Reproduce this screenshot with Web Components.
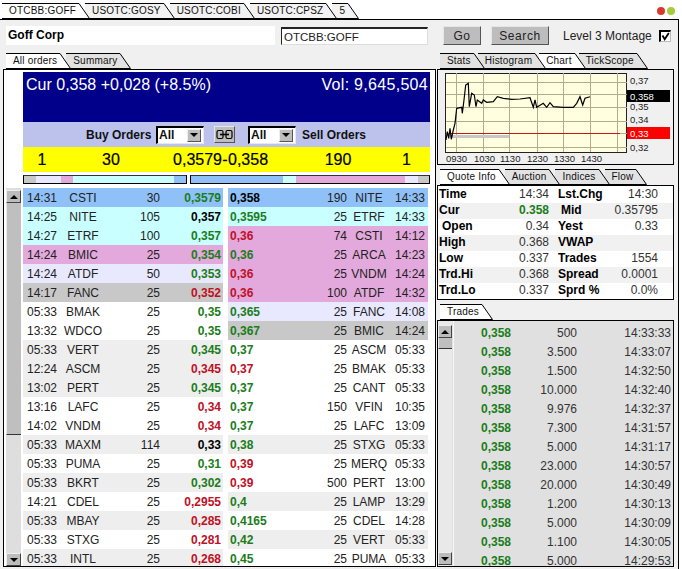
<!DOCTYPE html>
<html>
<head>
<meta charset="utf-8">
<title>Level 3 Montage</title>
<style>
  html, body { margin: 0; padding: 0; background: #fff; overflow: hidden; }
  body { width: 682px; height: 569px; font-family: "Liberation Sans", Arial, sans-serif; }
</style>
</head>
<body>
<montage-app></montage-app>
<script>
const GREEN = '#1a7d1a';
const RED = '#c01025';
const BLACK = '#000';
const ROW_BG = { b: '#8fc1f8', c: '#c9ffff', p: '#e3a9dc', l: '#e8e8ff', g: '#c8c8c8', w: '#fff', e: '#eeeeee' };

// bg, time, symbol, size, price, price colour
const BUY_ROWS = [
  ['b', '14:31', 'CSTI', '30', '0,3579', GREEN],
  ['c', '14:25', 'NITE', '105', '0,357', BLACK],
  ['c', '14:27', 'ETRF', '100', '0,357', GREEN],
  ['p', '14:24', 'BMIC', '25', '0,354', GREEN],
  ['l', '14:24', 'ATDF', '50', '0,353', GREEN],
  ['g', '14:17', 'FANC', '25', '0,352', RED],
  ['w', '05:33', 'BMAK', '25', '0,35', GREEN],
  ['w', '13:32', 'WDCO', '25', '0,35', GREEN],
  ['e', '05:33', 'VERT', '25', '0,345', GREEN],
  ['e', '12:24', 'ASCM', '25', '0,345', RED],
  ['e', '13:02', 'PERT', '25', '0,345', GREEN],
  ['w', '13:16', 'LAFC', '25', '0,34', RED],
  ['w', '14:02', 'VNDM', '25', '0,34', RED],
  ['e', '05:33', 'MAXM', '114', '0,33', BLACK],
  ['w', '05:33', 'PUMA', '25', '0,31', GREEN],
  ['e', '05:33', 'BKRT', '25', '0,302', GREEN],
  ['w', '14:21', 'CDEL', '25', '0,2955', RED],
  ['e', '05:33', 'MBAY', '25', '0,285', RED],
  ['w', '05:33', 'STXG', '25', '0,281', RED],
  ['e', '05:33', 'INTL', '25', '0,268', RED]
];

const SELL_ROWS = [
  ['b', '14:33', 'NITE', '190', '0,358', BLACK],
  ['c', '14:33', 'ETRF', '25', '0,3595', GREEN],
  ['p', '14:12', 'CSTI', '74', '0,36', RED],
  ['p', '14:23', 'ARCA', '25', '0,36', GREEN],
  ['p', '14:24', 'VNDM', '25', '0,36', RED],
  ['p', '14:32', 'ATDF', '100', '0,36', RED],
  ['l', '14:08', 'FANC', '25', '0,365', GREEN],
  ['g', '14:24', 'BMIC', '25', '0,367', GREEN],
  ['w', '05:33', 'ASCM', '25', '0,37', GREEN],
  ['w', '05:33', 'BMAK', '25', '0,37', RED],
  ['w', '05:33', 'CANT', '25', '0,37', GREEN],
  ['w', '10:35', 'VFIN', '150', '0,37', GREEN],
  ['w', '13:09', 'LAFC', '25', '0,37', GREEN],
  ['e', '05:33', 'STXG', '25', '0,38', GREEN],
  ['w', '05:33', 'MERQ', '25', '0,39', RED],
  ['w', '13:00', 'PERT', '500', '0,39', RED],
  ['e', '13:29', 'LAMP', '25', '0,4', GREEN],
  ['w', '14:28', 'CDEL', '25', '0,4165', GREEN],
  ['e', '05:33', 'VERT', '25', '0,42', GREEN],
  ['w', '05:33', 'PUMA', '25', '0,45', GREEN]
];

const TRADES = [
  ['500', '14:33:33'], ['3.500', '14:33:07'], ['1.500', '14:32:50'], ['10.000', '14:32:40'],
  ['9.976', '14:32:37'], ['7.300', '14:31:57'], ['5.000', '14:31:17'], ['23.000', '14:30:57'],
  ['20.000', '14:30:49'], ['1.200', '14:30:13'], ['5.000', '14:30:09'], ['1.100', '14:30:05'],
  ['5.000', '14:29:53']
];

class TabStrip extends HTMLElement {
  connectedCallback() {
    const items = this.getAttribute('items').split('|');
    const active = Number(this.getAttribute('active') || 0);
    const height = Number(this.getAttribute('height') || 16);
    const overlap = Number(this.getAttribute('overlap') || 5);
    const off = this.getAttribute('off') || '#e2e2e2';
    const tabs = items.map((label, i) => {
      const fill = i === active ? '#fff' : off;
      return `
        <div class="tab" style="z-index:${items.length - i};background:linear-gradient(${fill},${fill}) left/calc(100% - 12px) 100% no-repeat">
          <span>${label}</span>
          <svg width="12" height="${height}" viewBox="0 0 12 ${height}">
            <polygon points="0,0.5 1,0.5 11.5,${height - 0.5} 0,${height - 0.5}" fill="${fill}"/>
            <path d="M0 0.5H1L11.5 ${height - 0.5}H0" fill="none" stroke="#000"/>
          </svg>
        </div>`;
    }).join('');
    this.attachShadow({ mode: 'open' });
    this.shadowRoot.innerHTML = `
      <style>
        :host { display: flex; height: ${height}px; font-size: 10px; letter-spacing: 0.2px; color: #111; }
        .tab { display: flex; position: relative; margin-right: -${overlap}px; }
        .tab span {
          padding: 0 2px 0 7px;
          line-height: ${height - 2}px;
          border-top: 1px solid #000;
          border-bottom: 1px solid #000;
          white-space: nowrap;
        }
        .tab:first-child span { border-left: 1px solid #000; }
        svg { display: block; }
      </style>
      ${tabs}
    `;
  }
}

class BevelButton extends HTMLElement {
  constructor() {
    super();
    this.attachShadow({ mode: 'open' });
    this.shadowRoot.innerHTML = `
      <style>
        :host {
          display: flex;
          align-items: center;
          justify-content: center;
          box-sizing: border-box;
          height: 19px;
          background: #bdbdbd;
          border: 1px solid;
          border-color: #e6e6e6 #555 #555 #e6e6e6;
          font-size: 12px;
          letter-spacing: 0.6px;
          color: #222;
        }
      </style>
      <slot></slot>
    `;
  }
}

class OrderSelect extends HTMLElement {
  constructor() {
    super();
    this.attachShadow({ mode: 'open' });
    this.shadowRoot.innerHTML = `
      <style>
        :host {
          display: flex;
          align-items: center;
          justify-content: space-between;
          box-sizing: border-box;
          width: 48px;
          height: 18px;
          padding: 0 2px 0 1px;
          background: #fff;
          border: 1px solid;
          border-color: #000 #e8e8e8 #e8e8e8 #000;
          border-width: 2px 1px 1px 2px;
          font-size: 12px;
          font-weight: bold;
          flex: none;
        }
        .arrow {
          display: flex;
          align-items: center;
          justify-content: center;
          width: 14px;
          height: 13px;
          background: #bdbdbd;
          border: 1px solid;
          border-color: #eee #555 #555 #eee;
          box-sizing: border-box;
        }
        .arrow i { width: 0; height: 0; border: 4px solid transparent; border-top-color: #000; border-bottom: 0; }
      </style>
      <slot></slot>
      <span class="arrow"><i></i></span>
    `;
  }
}

class DepthBar extends HTMLElement {
  connectedCallback() {
    // segments as colour key:pixels
    const segs = this.getAttribute('segments').split(' ').map(s => {
      const [key, w] = s.split(':');
      return `<i style="background:${ROW_BG[key]};flex:${w} 0 0"></i>`;
    }).join('');
    this.attachShadow({ mode: 'open' });
    this.shadowRoot.innerHTML = `
      <style>
        :host { display: flex; box-sizing: border-box; height: 9px; border: 1px solid #000; border-top-color: #333; }
        i { display: block; }
      </style>
      ${segs}
    `;
  }
}

class OrderRow extends HTMLElement {
  connectedCallback() {
    const [bg, time, sym, size, price, colour] = JSON.parse(this.getAttribute('data'));
    const sell = this.getAttribute('side') === 'sell';
    const cells = sell
      ? `<b class="pr" style="color:${colour}">${price}</b><span class="sz">${size}</span><span class="sy">${sym}</span><span class="tm">${time}</span>`
      : `<span class="tm">${time}</span><span class="sy">${sym}</span><span class="sz">${size}</span><b class="pr" style="color:${colour}">${price}</b>`;
    this.attachShadow({ mode: 'open' });
    this.shadowRoot.innerHTML = `
      <style>
        :host {
          display: grid;
          box-sizing: border-box;
          height: 19px;
          line-height: 18px;
          font-size: 12px;
          color: #222;
          background: ${ROW_BG[bg]};
          grid-template-columns: ${sell ? '60px 57px 44px 34px' : '36px 40px 57px 61px'};
          padding: ${sell ? '1px 5px 0 2px' : '1px 2px 0 4px'};
        }
        .sy { text-align: center; white-space: nowrap; }
        .sz { text-align: right; }
        .tm { text-align: ${sell ? 'right' : 'left'}; }
        .pr { text-align: ${sell ? 'left' : 'right'}; }
      </style>
      ${cells}
    `;
  }
}

class ScrollTrack extends HTMLElement {
  connectedCallback() {
    const thumb = this.getAttribute('thumb');
    this.attachShadow({ mode: 'open' });
    this.shadowRoot.innerHTML = `
      <style>
        :host { display: flex; flex-direction: column; width: ${this.getAttribute('width') || 14}px; background: ${this.getAttribute('track') || '#dedede'}; flex: none; }
        .btn {
          display: flex;
          align-items: center;
          justify-content: center;
          box-sizing: border-box;
          height: 13px;
          background: #bcbcbc;
          border: 1px solid;
          border-color: #eee #444 #444 #eee;
          flex: none;
        }
        .up i, .down i { width: 0; height: 0; border: 4px solid transparent; }
        .up i { border-bottom-color: #000; border-top: 0; }
        .down i { border-top-color: #000; border-bottom: 0; }
        .thumb { box-sizing: border-box; height: ${thumb}px; background: #bfbfbf; border-bottom: 1px solid #333; border-left: 1px solid #e8e8e8; flex: none; }
        .rest { flex: 1; }
        .lead { height: ${this.getAttribute('lead') || 0}px; flex: none; }
        .tail { height: ${this.getAttribute('tail') || 0}px; flex: none; }
      </style>
      <div class="lead"></div>
      <div class="btn up"><i></i></div>
      <div class="thumb"></div>
      <div class="rest"></div>
      <div class="btn down"><i></i></div>
      <div class="tail"></div>
    `;
  }
}

class OrderBook extends HTMLElement {
  connectedCallback() {
    const row = (side, r) => `<order-row side="${side}" data='${JSON.stringify(r)}'></order-row>`;
    this.attachShadow({ mode: 'open' });
    this.shadowRoot.innerHTML = `
      <style>
        :host {
          display: block;
          box-sizing: border-box;
          height: 498px;
          background: #fff;
          border: 1px solid #000;
          overflow: hidden;
        }
        .top { margin: 2px 5px 0 19px; }
        .cur {
          display: flex;
          justify-content: space-between;
          height: 50px;
          padding: 3px 2px 0 3px;
          box-sizing: border-box;
          background: #00008b;
          color: #fff;
          font-size: 16px;
          line-height: 20px;
        }
        .cur span:last-child { letter-spacing: 0.3px; }
        .filter {
          display: flex;
          align-items: center;
          height: 25px;
          padding-left: 63px;
          background: #bcc2ec;
          font-size: 12px;
          font-weight: bold;
          color: #111;
        }
        .filter span { width: 64px; white-space: nowrap; flex: none; }
        .filter order-select:first-of-type { margin-left: 6px; }
        .link { width: 21px; height: 17px; margin: 0 13px 0 10px; flex: none; }
        .filter .sell { margin-left: 6px; }
        .best {
          display: grid;
          grid-template-columns: 38px 100px 61px 6px 80px 60px 1fr;
          height: 25px;
          line-height: 25px;
          background: #ffff00;
          font-size: 16px;
          -webkit-text-stroke: 0.2px #000;
        }
        .best span { text-align: center; }
        .best .r { text-align: right; }
        .best .l { text-align: left; }
        .best .last { text-align: right; padding-right: 19px; }
        .bars { display: flex; gap: 3px; margin: 3px 5px 0 19px; }
        .bars depth-bar:first-child { width: 164px; }
        .bars depth-bar:last-child { width: 240px; }
        .rows { display: flex; margin: 4px 0 0 2px; gap: 2px; height: 380px; }
        .sides { display: flex; gap: 5px; }
        .side { width: 200px; }
      </style>
      <div class="top">
        <div class="cur"><span>Cur 0,358 +0,028 (+8.5%)</span><span>Vol: 9,645,504</span></div>
        <div class="filter">
          <span>Buy Orders</span>
          <order-select>All</order-select>
          <bevel-button class="link">
            <svg width="17" height="11" viewBox="0 0 17 11" fill="none" stroke="#000" stroke-width="1.2">
              <rect x="1" y="1.5" width="6" height="8" rx="1.5"/>
              <rect x="10" y="1.5" width="6" height="8" rx="1.5"/>
              <path d="M4 5.5H13" stroke-width="1.6"/>
            </svg>
          </bevel-button>
          <order-select>All</order-select>
          <span class="sell">Sell Orders</span>
        </div>
        <div class="best">
          <span>1</span><span>30</span><span class="r">0,3579</span><span>-</span><span class="l">0,358</span><span>190</span><span class="last">1</span>
        </div>
      </div>
      <div class="bars">
        <depth-bar segments="g:12 l:25 p:12 c:101 b:12"></depth-bar>
        <depth-bar segments="b:92 c:13 p:109 l:13 g:11"></depth-bar>
      </div>
      <div class="rows">
        <scroll-track thumb="232" lead="2" width="15" tail="2"></scroll-track>
        <div class="sides">
          <div class="side">${BUY_ROWS.map(r => row('buy', r)).join('')}</div>
          <div class="side">${SELL_ROWS.map(r => row('sell', r)).join('')}</div>
        </div>
      </div>
    `;
  }
}

class ChartPanel extends HTMLElement {
  connectedCallback() {
    // line traced in 3x crop coordinates, mapped to page pixels below
    const raw = [18,270, 22,245, 26,265, 30,235, 34,268, 40,240, 45,220, 50,175, 65,172, 67,190, 72,150, 77,105,
      85,100, 88,170, 95,130, 103,135, 108,170, 112,150, 125,160, 130,150, 140,157, 160,155, 172,140, 190,145,
      215,148, 240,147, 270,143, 280,172, 285,150, 290,172, 310,160, 320,172, 330,158, 340,170, 370,172, 400,172,
      410,160, 420,140, 428,165, 435,145, 450,140];
    const pts = [];
    for (let i = 0; i < raw.length; i += 2) {
      pts.push((440 + raw[i] / 3).toFixed(1) + ',' + (50 + raw[i + 1] / 3).toFixed(1));
    }
    const vx = [456, 483, 509, 537, 563, 590, 617];
    const hy = [82, 94, 107, 121, 133, 147];
    const grid = vx.map(x => `<path d="M${x + 0.5} 73V152"/>`).join('') +
      hy.map(y => `<path d="M446 ${y + 0.5}H627"/>`).join('');
    const times = [['0930', 446], ['1030', 474], ['1130', 500], ['1230', 527], ['1330', 554], ['1430', 581]];
    const axis = [['0,37', 84], ['0,35', 110], ['0,34', 123], ['0,32', 151]];
    this.attachShadow({ mode: 'open' });
    this.shadowRoot.innerHTML = `
      <style>
        :host { display: block; box-sizing: border-box; height: 96px; border: 1px solid #000; background: #f0f0f0; }
        svg { display: block; font-family: "Liberation Sans", Arial, sans-serif; font-size: 9.5px; }
        text { fill: #222; }
      </style>
      <svg width="235" height="94" viewBox="438 70 235 94">
        <rect x="445.5" y="73.5" width="181" height="79" fill="#ffffdf" stroke="#222"/>
        <g stroke="#b3ab90" fill="none">${grid}</g>
        <rect x="450" y="135" width="59" height="3" fill="#c8c8c8"/>
        <path d="M450 133.5H620" stroke="#c01818"/>
        <polyline points="${pts.join(' ')}" fill="none" stroke="#000" stroke-width="1.2"/>
        <rect x="627" y="90" width="43" height="12" fill="#000"/>
        <rect x="627" y="127" width="43" height="12" fill="#ff0000"/>
        ${axis.map(([t, y]) => `<text x="630" y="${y}">${t}</text>`).join('')}
        <text x="630" y="99.5" style="fill:#fff">0,358</text>
        <text x="630" y="137" style="fill:#fff">0,33</text>
        ${times.map(([t, x]) => `<text x="${x}" y="162">${t}</text>`).join('')}
      </svg>
    `;
  }
}

class QuoteInfo extends HTMLElement {
  connectedCallback() {
    const rows = [
      ['Time', '14:34', 'Lst.Chg', '14:30'],
      ['Cur', '0.358', 'Mid', '0.35795'],
      ['Open', '0.34', 'Yest', '0.33'],
      ['High', '0.368', 'VWAP', ''],
      ['Low', '0.337', 'Trades', '1554'],
      ['Trd.Hi', '0.368', 'Spread', '0.0001'],
      ['Trd.Lo', '0.337', 'Sprd %', '0.0%']
    ];
    const html = rows.map(([a, b, c, d], i) => `
      <div class="row${i % 2 ? ' alt' : ''}">
        <b class="${a === 'Open' ? 'in' : ''}">${a}</b>
        <span class="${a === 'Cur' ? 'cur' : ''}">${b}</span>
        <b class="${c === 'Mid' ? 'in' : ''}">${c}</b>
        <span>${d}</span>
      </div>`).join('');
    this.attachShadow({ mode: 'open' });
    this.shadowRoot.innerHTML = `
      <style>
        :host { display: block; box-sizing: border-box; height: 115px; padding-top: 1px; background: #fff; border: 1px solid #000; }
        .row {
          display: grid;
          grid-template-columns: 50px 60px 60px 49px;
          column-gap: 0;
          height: 16px;
          line-height: 15px;
          font-size: 12px;
          padding-left: 1px;
          color: #333;
        }
        .row b { color: #000; }
        .row b:nth-of-type(2) { margin-left: 9px; }
        .row b.in { padding-left: 3px; }
        .row span { text-align: right; }
        .alt { background: #f1f1f1; }
        .cur { color: ${GREEN}; font-weight: bold; }
      </style>
      ${html}
    `;
  }
}

class TradesList extends HTMLElement {
  connectedCallback() {
    this.attachShadow({ mode: 'open' });
    this.shadowRoot.innerHTML = `
      <style>
        :host {
          display: flex;
          box-sizing: border-box;
          height: 247px;
          background: #e0e0e0;
          border: 1px solid #000;
          overflow: hidden;
        }
        scroll-track { margin-right: 1px; }
        .rows { padding-top: 3px; height: 247px; border-left: 1px solid #f8f8f8; }
        .row {
          display: grid;
          grid-template-columns: 57px 66px 94px;
          height: 19px;
          line-height: 19px;
          font-size: 12px;
          color: #333;
          text-align: right;
        }
        b { color: ${GREEN}; }
      </style>
      <scroll-track thumb="11" lead="4" track="#e9e9e9" tail="1"></scroll-track>
      <div class="rows">
        ${TRADES.map(([size, time]) => `<div class="row"><b>0,358</b><span>${size}</span><span>${time}</span></div>`).join('')}
      </div>
    `;
  }
}

class MontageHeader extends HTMLElement {
  constructor() {
    super();
    this.attachShadow({ mode: 'open' });
    this.shadowRoot.innerHTML = `
      <style>
        :host { display: flex; align-items: center; height: 19px; padding-left: 3px; font-size: 12px; color: #222; }
        .name { box-sizing: border-box; width: 269px; height: 19px; padding-left: 2px; line-height: 18px; background: #fff; font-weight: bold; color: #000; }
        .sym {
          box-sizing: border-box;
          width: 147px;
          height: 18px;
          margin: 0 15px 0 6px;
          padding-left: 2px;
          line-height: 17px;
          font-size: 11.5px;
          background: #fff;
          border: 1px solid;
          border-width: 2px 1px 1px 1px;
          border-color: #222 #ddd #ddd #222;
        }
        .go { width: 38px; margin-right: 10px; }
        .search { width: 58px; margin-right: 14px; }
        .label { margin-right: 7px; white-space: nowrap; }
        .check {
          display: flex;
          box-sizing: border-box;
          width: 12px;
          height: 12px;
          background: #fff;
          border: solid #000;
          border-width: 2px 1px 1px 2px;
          border-color: #000 #bbb #bbb #000;
        }
      </style>
      <div class="name">Goff Corp</div>
      <div class="sym">OTCBB:GOFF</div>
      <bevel-button class="go">Go</bevel-button>
      <bevel-button class="search">Search</bevel-button>
      <span class="label">Level 3 Montage</span>
      <span class="check">
        <svg width="9" height="9" viewBox="0 0 9 9"><path d="M1.5 3.5L3.7 7.2L7.8 1" fill="none" stroke="#000" stroke-width="1.8"/></svg>
      </span>
    `;
  }
}

class MontageApp extends HTMLElement {
  constructor() {
    super();
    this.attachShadow({ mode: 'open' });
    this.shadowRoot.innerHTML = `
      <style>
        :host { display: block; width: 682px; height: 569px; background: #fff; overflow: hidden; }
        .strip { display: flex; align-items: center; justify-content: space-between; padding: 3px 7px 0 2px; height: 16px; }
        .leds { display: flex; gap: 2px; }
        .leds i { display: block; width: 8px; height: 8px; border-radius: 50%; }
        .main {
          box-sizing: border-box;
          width: 679px;
          height: 550px;
          padding: 6px 0 0 3px;
          background: #f0f0f0;
          border-top: 1px solid #000;
          border-right: 1px solid #000;
        }
        .cols { display: grid; grid-template-columns: 433px 237px; column-gap: 1px; margin-top: 8px; }
        .stack { display: flex; flex-direction: column; }
        tab-strip.sub { margin-left: 3px; }
        tab-strip.gap { margin-top: 4px; }
      </style>
      <div class="strip">
        <tab-strip items="OTCBB:GOFF|USOTC:GOSY|USOTC:COBI|USOTC:CPSZ|5" off="#f2f2f2"></tab-strip>
        <div class="leds"><i style="background:#d8392f"></i><i style="background:#a6cc3a"></i></div>
      </div>
      <div class="main">
        <montage-header></montage-header>
        <div class="cols">
          <div class="stack">
            <tab-strip class="sub" items="All orders|Summary"></tab-strip>
            <order-book></order-book>
          </div>
          <div class="stack">
            <tab-strip class="sub" items="Stats|Histogram|Chart|TickScope" active="2" overlap="7"></tab-strip>
            <chart-panel></chart-panel>
            <tab-strip class="sub gap" items="Quote Info|Auction|Indices|Flow"></tab-strip>
            <quote-info></quote-info>
            <tab-strip class="sub gap" items="Trades"></tab-strip>
            <trades-list></trades-list>
          </div>
        </div>
      </div>
    `;
  }
}

customElements.define('tab-strip', TabStrip);
customElements.define('bevel-button', BevelButton);
customElements.define('order-select', OrderSelect);
customElements.define('depth-bar', DepthBar);
customElements.define('order-row', OrderRow);
customElements.define('scroll-track', ScrollTrack);
customElements.define('order-book', OrderBook);
customElements.define('chart-panel', ChartPanel);
customElements.define('quote-info', QuoteInfo);
customElements.define('trades-list', TradesList);
customElements.define('montage-header', MontageHeader);
customElements.define('montage-app', MontageApp);
</script>
</body>
</html>
